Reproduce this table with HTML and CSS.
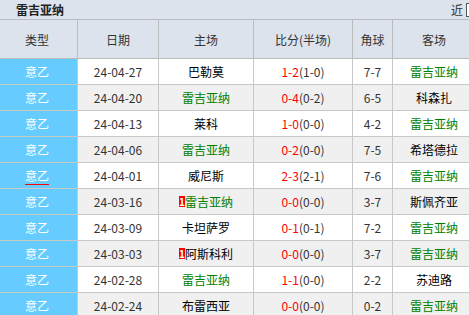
FILE: index.html
```html
<!DOCTYPE html>
<html>
<head>
<meta charset="utf-8">
<link rel="stylesheet" href="styles.css">
</head>
<body>
<div class="page">
  <div class="topbar">
    <span class="title">雷吉亚纳</span>
    <span class="near">近</span>
    <span class="selbox"></span>
  </div>
  <table class="matches">
    <colgroup>
      <col class="c-type"><col class="c-date"><col class="c-home"><col class="c-score"><col class="c-corner"><col class="c-away">
    </colgroup>
    <thead>
      <tr><th>类型</th><th>日期</th><th>主场</th><th>比分(半场)</th><th>角球</th><th>客场</th></tr>
    </thead>
    <tbody>
      <tr><td class="lg">意乙</td><td class="dt">24-04-27</td><td class="tm">巴勒莫</td><td class="sc"><span class="ft">1-2</span>(1-0)</td><td class="cn">7-7</td><td class="tm own">雷吉亚纳</td></tr>
      <tr class="alt"><td class="lg">意乙</td><td class="dt">24-04-20</td><td class="tm own">雷吉亚纳</td><td class="sc"><span class="ft">0-4</span>(0-2)</td><td class="cn">6-5</td><td class="tm">科森扎</td></tr>
      <tr><td class="lg">意乙</td><td class="dt">24-04-13</td><td class="tm">莱科</td><td class="sc"><span class="ft">1-0</span>(0-0)</td><td class="cn">4-2</td><td class="tm own">雷吉亚纳</td></tr>
      <tr class="alt"><td class="lg">意乙</td><td class="dt">24-04-06</td><td class="tm own">雷吉亚纳</td><td class="sc"><span class="ft">0-2</span>(0-0)</td><td class="cn">7-5</td><td class="tm">希塔德拉</td></tr>
      <tr><td class="lg"><span class="ul">意乙</span></td><td class="dt">24-04-01</td><td class="tm">威尼斯</td><td class="sc"><span class="ft">2-3</span>(2-1)</td><td class="cn">7-6</td><td class="tm own">雷吉亚纳</td></tr>
      <tr class="alt"><td class="lg">意乙</td><td class="dt">24-03-16</td><td class="tm own"><span class="rc">1</span>雷吉亚纳</td><td class="sc"><span class="ft">0-0</span>(0-0)</td><td class="cn">3-7</td><td class="tm">斯佩齐亚</td></tr>
      <tr><td class="lg">意乙</td><td class="dt">24-03-09</td><td class="tm">卡坦萨罗</td><td class="sc"><span class="ft">0-1</span>(0-1)</td><td class="cn">7-2</td><td class="tm own">雷吉亚纳</td></tr>
      <tr class="alt"><td class="lg">意乙</td><td class="dt">24-03-03</td><td class="tm"><span class="rc">1</span>阿斯科利</td><td class="sc"><span class="ft">0-0</span>(0-0)</td><td class="cn">3-7</td><td class="tm own">雷吉亚纳</td></tr>
      <tr><td class="lg">意乙</td><td class="dt">24-02-28</td><td class="tm own">雷吉亚纳</td><td class="sc"><span class="ft">1-1</span>(0-0)</td><td class="cn">2-2</td><td class="tm">苏迪路</td></tr>
      <tr class="alt"><td class="lg">意乙</td><td class="dt">24-02-24</td><td class="tm">布雷西亚</td><td class="sc"><span class="ft">0-0</span>(0-0)</td><td class="cn">0-2</td><td class="tm own">雷吉亚纳</td></tr>
    </tbody>
  </table>
</div>
</body>
</html>
```
FILE: styles.css
```css
html, body {
  margin: 0;
  padding: 0;
  overflow: hidden;
  background: #ffffff;
}
body {
  font-family: "Noto Sans CJK SC", "Noto Sans", sans-serif;
  font-size: 12px;
  color: #333;
}
.page {
  width: 520px;
}
.topbar {
  height: 19px;
  background: #dde3ec;
  display: flex;
  align-items: center;
  padding-left: 16px;
  padding-right: 14px;
}
.title {
  font-weight: bold;
  color: #222;
  font-size: 12px;
  line-height: 19px;
}
.near {
  margin-left: auto;
  color: #333;
  line-height: 19px;
}
.selbox {
  width: 38px;
  height: 12px;
  margin-left: 3px;
  border: 1px solid #555;
  background: #fff;
}
.matches {
  border-collapse: collapse;
  table-layout: fixed;
  width: 479px;
  margin-left: -4px;
}
.c-type { width: 81px; }
.c-date { width: 81px; }
.c-home { width: 95px; }
.c-score { width: 99px; }
.c-corner { width: 40px; }
.c-away { width: 83px; }
.matches th {
  height: 38px;
  padding: 0;
  background: #dde3ec;
  border: 1px solid #bcbcbc;
  font-weight: normal;
  color: #333;
  text-align: center;
}
.matches td {
  height: 25px;
  padding: 0;
  border: 1px solid #c8c8c8;
  text-align: center;
  white-space: nowrap;
  background: #ffffff;
}
.matches tr.alt td {
  background: #f0f0f0;
}
.matches td.lg,
.matches tr.alt td.lg {
  background: #66ccff;
  color: #ffffff;
}
.ul {
  text-decoration: underline;
  text-decoration-color: #ff0000;
  text-underline-offset: 3px;
}
.tm {
  color: #000;
}
.tm.own {
  color: #008000;
}
.ft {
  color: #ff0000;
}
.rc {
  display: inline-block;
  background: #ff0000;
  color: #ffffff;
  font-weight: bold;
  font-size: 10px;
  line-height: 11px;
  padding: 0;
  vertical-align: 1px;
}
```
